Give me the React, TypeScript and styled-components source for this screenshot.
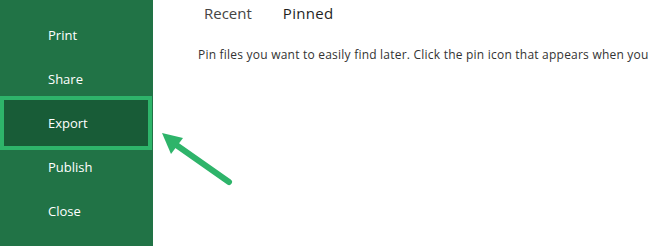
import React from 'react';
import styled, { createGlobalStyle } from 'styled-components';

const GlobalStyle = createGlobalStyle`
  html, body {
    margin: 0;
    padding: 0;
    background: #fff;
  }
  body {
    font-family: 'Open Sans', 'Noto Sans', sans-serif;
    overflow: hidden;
  }
`;

const Page = styled.div`
  position: relative;
  display: flex;
  width: 650px;
  height: 246px;
  overflow: hidden;
`;

const Sidebar = styled.nav`
  width: 153px;
  flex-shrink: 0;
  background: #217346;
  display: flex;
  flex-direction: column;
  padding-top: 13px;
  box-sizing: border-box;
`;

const NavItem = styled.div<{ $active?: boolean }>`
  height: ${(p) => (p.$active ? '54px' : '44px')};
  margin: ${(p) => (p.$active ? '-5px 1px -5px 0' : '0')};
  box-sizing: border-box;
  display: flex;
  align-items: center;
  padding-left: ${(p) => (p.$active ? '44px' : '48px')};
  color: #fff;
  font-size: 13px;
  background: ${(p) => (p.$active ? '#185c37' : 'transparent')};
  border: ${(p) => (p.$active ? '4px solid #2eb46a' : 'none')};
`;

const Main = styled.main`
  flex: 1;
  min-width: 0;
  padding-left: 45px;
  display: flex;
  flex-direction: column;
`;

const Tabs = styled.div`
  display: flex;
  gap: 31px;
  padding-left: 6px;
  height: 26px;
  align-items: center;
`;

const Tab = styled.span<{ $selected?: boolean }>`
  font-size: 15px;
  color: ${(p) => (p.$selected ? '#1f1f1f' : '#444')};
  letter-spacing: ${(p) => (p.$selected ? '0.3px' : '0')};
`;

const Hint = styled.p`
  margin: 20px 0 0;
  font-size: 12px;
  color: #333;
  white-space: nowrap;
  letter-spacing: 0.22px;
`;

const Arrow = styled.svg`
  position: absolute;
  left: 155px;
  top: 125px;
`;

const items = ['Print', 'Share', 'Export', 'Publish', 'Close'];

export default function App() {
  return (
    <>
      <GlobalStyle />
      <Page>
        <Sidebar>
          {items.map((it) => (
            <NavItem key={it} $active={it === 'Export'}>
              {it}
            </NavItem>
          ))}
        </Sidebar>
        <Main>
          <Tabs>
            <Tab>Recent</Tab>
            <Tab $selected>Pinned</Tab>
          </Tabs>
          <Hint>Pin files you want to easily find later. Click the pin icon that appears when you</Hint>
        </Main>
        <Arrow width="85" height="65" viewBox="155 125 85 65">
          <line x1="229" y1="182" x2="172" y2="142" stroke="#2eb46a" strokeWidth="6" strokeLinecap="round" />
          <polygon points="162,133 183,138 171,154" fill="#2eb46a" />
        </Arrow>
      </Page>
    </>
  );
}
